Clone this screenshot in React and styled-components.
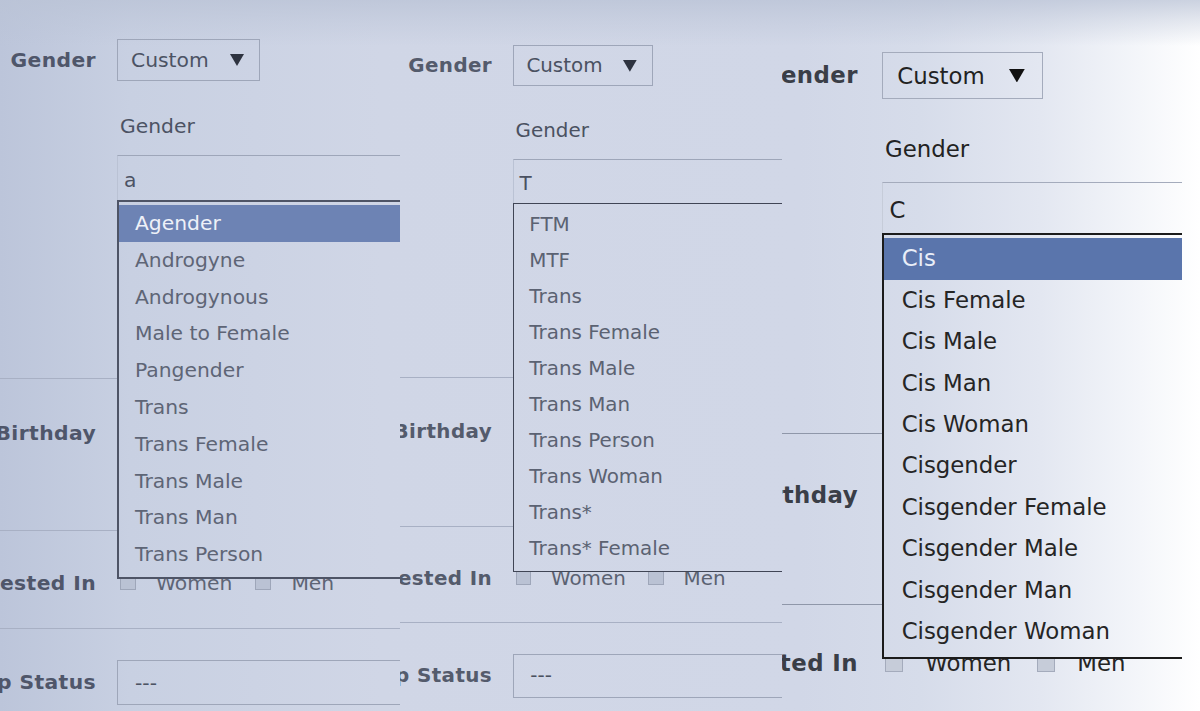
import React from 'react'
import styled, { createGlobalStyle, ThemeProvider } from 'styled-components'

// sizes are written at the scale of the first capture, the theme scales them per panel
const u = n => ({ theme }) => `${n * theme.s}px`
const su = (p, n) => `${n * p.theme.s}px`

const PAGE_BG = `
  linear-gradient(to bottom, rgba(186,195,214,.75) 0, rgba(186,195,214,.4) 20px, rgba(186,195,214,0) 46px),
  linear-gradient(to right, #bcc5da 0, #c8d0e2 130px, #d0d6e6 380px, #d1d7e7 800px, #d6dcea 920px, #e3e7f1 1040px, #f4f6fa 1140px, #ffffff 1200px)
`

const GlobalStyle = createGlobalStyle`
  html, body { margin: 0; padding: 0; }
  body { font-family: "DejaVu Sans", Verdana, sans-serif; }
`

const Page = styled.div`
  display: flex;
  width: 1200px;
  height: 711px;
  overflow: hidden;
  background: ${PAGE_BG};
  background-attachment: fixed;
`

const Panel = styled.section`
  flex: none;
  width: ${p => p.$w}px;
  height: 100%;
  overflow: hidden;
`

const Form = styled.div`
  margin-left: ${p => p.$dx}px;
  padding-top: ${p => p.$dy}px;
  width: ${u(720)};
  font-size: ${u(20.3)};
  color: ${({ theme }) => theme.ink};
`

const Row = styled.div`
  display: grid;
  grid-template-columns: ${u(96)} 1fr;
  column-gap: ${u(21)};
  align-items: start;
  box-sizing: border-box;
  min-height: ${p => su(p, p.$h)};
  padding-top: ${p => su(p, p.$pt)};
  border-bottom: ${p => (p.$last ? '0' : '1px')} solid ${({ theme }) => theme.rule};
`

const Label = styled.div`
  display: flex;
  justify-content: flex-end;
  white-space: nowrap;
  font-weight: bold;
  letter-spacing: ${u(0.4)};
  color: ${({ theme }) => theme.label};
  line-height: ${p => su(p, p.$lh || 24)};
`

const Field = styled.div`
  display: flex;
  flex-direction: column;
  align-items: flex-start;
`

const Select = styled.div`
  display: flex;
  align-items: center;
  justify-content: space-between;
  box-sizing: border-box;
  width: ${p => su(p, p.$w)};
  height: ${p => su(p, p.$h)};
  padding: 0 ${u(15)} 0 ${p => su(p, p.$pl)};
  border: 1px solid ${({ theme }) => theme.box};
  color: ${({ theme }) => theme.strong};
  white-space: nowrap;
`

const Caret = styled.svg`
  width: ${u(14)};
  height: ${u(12)};
  fill: ${({ theme }) => theme.caret};
`

const SubLabel = styled.div`
  margin-top: ${u(33)};
  padding-left: ${u(3)};
  line-height: ${u(24)};
  color: ${({ theme }) => theme.strong};
`

const Input = styled.div`
  position: relative;
  box-sizing: border-box;
  margin-top: ${u(17)};
  width: ${u(400)};
  height: ${u(45)};
  padding: ${u(12)} 0 0 ${u(6)};
  line-height: ${u(24)};
  border-top: 1px solid ${({ theme }) => theme.box};
  border-left: 1px solid ${({ theme }) => theme.boxSoft};
  color: ${({ theme }) => theme.strong};
`

const Menu = styled.ul`
  position: absolute;
  z-index: 2;
  top: 100%;
  left: -1px;
  width: ${u(400)};
  margin: 0;
  padding: ${u(3)} 0 ${u(4)};
  list-style: none;
  border: ${u(2)} solid ${({ theme }) => theme.frame};
  border-right: 0;
  background: ${PAGE_BG};
  background-attachment: fixed;
`

const Option = styled.li`
  height: ${u(36.8)};
  line-height: ${u(36.8)};
  padding-left: ${u(16)};
  white-space: nowrap;
  color: ${p => (p.$active ? p.theme.hiInk : p.theme.ink)};
  background: ${p => (p.$active ? p.theme.hi : 'transparent')};
`

const Checks = styled.div`
  display: flex;
  align-items: center;
  line-height: ${u(24)};
  padding-left: ${u(3)};
  color: ${({ theme }) => theme.ink};
`

const Box = styled.span`
  width: ${u(14)};
  height: ${u(12)};
  margin-right: ${u(20)};
  border: 1px solid ${({ theme }) => theme.box};
  background: ${({ theme }) => theme.boxSoft};
`

const CheckText = styled.span`
  margin-right: ${u(23)};
`

const Filler = styled.div`
  flex: 1;
`

const panels = [
  {
    w: 400, dx: 0, dy: 0,
    theme: {
      s: 1, ink: '#5e6576', strong: '#4c5364', label: '#4f566a', rule: '#a8b0c4',
      box: '#9ea6b9', boxSoft: '#bac2d4', frame: '#4e5466', caret: '#2e3340',
      hi: '#6d83b4', hiInk: '#eef1f8',
    },
    typed: 'a',
    active: 0,
    options: ['Agender', 'Androgyne', 'Androgynous', 'Male to Female', 'Pangender', 'Trans', 'Trans Female', 'Trans Male', 'Trans Man', 'Trans Person'],
  },
  {
    w: 382, dx: -2, dy: 7,
    theme: {
      s: 0.98, ink: '#5b6272', strong: '#4a5161', label: '#545b6c', rule: '#a8b0c4',
      box: '#9ea6b9', boxSoft: '#bac2d4', frame: '#404555', caret: '#2e3340',
      hi: '#6d83b4', hiInk: '#eef1f8',
    },
    typed: 'T',
    active: -1,
    options: ['FTM', 'MTF', 'Trans', 'Trans Female', 'Trans Male', 'Trans Man', 'Trans Person', 'Trans Woman', 'Trans*', 'Trans* Female'],
  },
  {
    w: 400, dx: -32, dy: 8,
    theme: {
      s: 1.125, ink: '#252525', strong: '#222222', label: '#3a3e47', rule: '#8f97a9',
      box: '#a4abbc', boxSoft: '#c6ccd9', frame: '#1b1b1b', caret: '#111111',
      hi: '#5a75ac', hiInk: '#e9eef8',
    },
    typed: 'C',
    active: 0,
    options: ['Cis', 'Cis Female', 'Cis Male', 'Cis Man', 'Cis Woman', 'Cisgender', 'Cisgender Female', 'Cisgender Male', 'Cisgender Man', 'Cisgender Woman'],
  },
]

const Capture = ({ w, dx, dy, theme, typed, active, options }) => (
  <ThemeProvider theme={theme}>
    <Panel $w={w}>
      <Form $dx={dx} $dy={dy}>
        <Row $h={379} $pt={39}>
          <Label $lh={42}>Gender</Label>
          <Field>
            <Select $w={143} $h={42} $pl={13}>
              Custom
              <Caret viewBox="0 0 14 12"><polygon points="0,0 14,0 7,12" /></Caret>
            </Select>
            <SubLabel>Gender</SubLabel>
            <Input>
              {typed}
              <Menu>
                {options.map((o, i) => (
                  <Option key={o} $active={i === active}>{o}</Option>
                ))}
              </Menu>
            </Input>
          </Field>
        </Row>
        <Row $h={152} $pt={42}>
          <Label>Birthday</Label>
          <Field />
        </Row>
        <Row $h={98} $pt={40}>
          <Label>Interested In</Label>
          <Checks>
            <Box /><CheckText>Women</CheckText>
            <Box /><CheckText>Men</CheckText>
          </Checks>
        </Row>
        <Row $h={90} $pt={31} $last>
          <Label $lh={45}>Relationship Status</Label>
          <Field>
            <Select $w={400} $h={45} $pl={17}>---</Select>
          </Field>
        </Row>
      </Form>
    </Panel>
  </ThemeProvider>
)

export default function App() {
  return (
    <>
      <GlobalStyle />
      <Page>
        {panels.map((p, i) => <Capture key={i} {...p} />)}
        <Filler />
      </Page>
    </>
  )
}
